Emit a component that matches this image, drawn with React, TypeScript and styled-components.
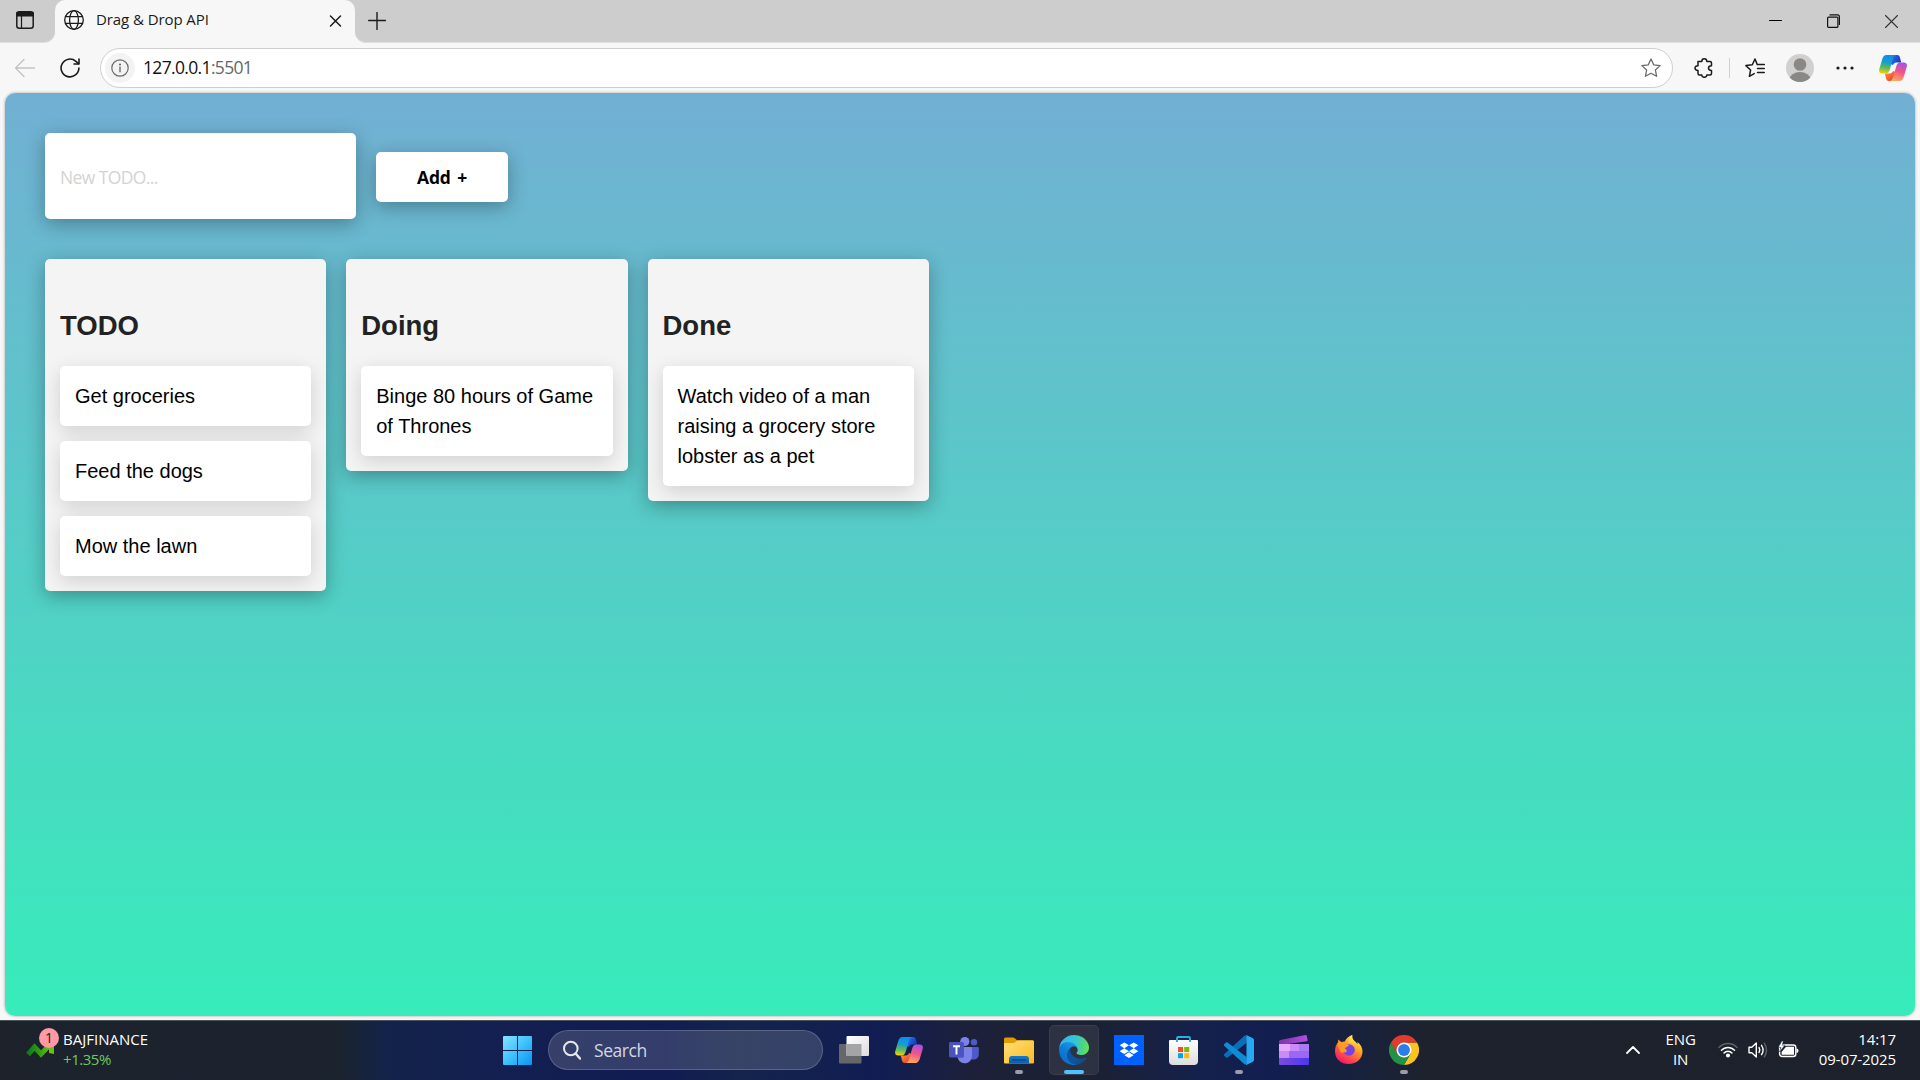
import React from "react";
import styled, { createGlobalStyle } from "styled-components";

const UI_FONT = '"Segoe UI", "Open Sans", "Noto Sans", sans-serif';

const GlobalStyle = createGlobalStyle`
  *, *::before, *::after { box-sizing: border-box; }
  html, body { margin: 0; padding: 0; overflow: hidden; }
  body { font-family: ${UI_FONT}; background: #f7f7f7; }
  svg { display: block; flex: none; }
`;

const Screen = styled.div`
  width: 1920px;
  height: 1080px;
  display: flex;
  flex-direction: column;
  background: #f7f7f7;
  overflow: hidden;
`;

/* ---------- Browser frame ---------- */

const TitleBar = styled.header`
  display: flex;
  height: 43px;
  flex: none;
`;

const Strip = styled.div<{ $side: "left" | "right" }>`
  display: flex;
  align-items: center;
  background: #cdcdcd;
  border-bottom: 1px solid #dedede;
  ${(p) =>
    p.$side === "left"
      ? "width: 55px; padding: 0 0 3px 16px; border-bottom-right-radius: 11px;"
      : "flex: 1; padding: 0 22px 1px 13px; border-bottom-left-radius: 11px;"}
`;

const TabSlot = styled.div`
  width: 300px;
  background: linear-gradient(#cdcdcd 50%, #f7f7f7 50%);
`;

const Tab = styled.div`
  height: 43px;
  display: flex;
  align-items: center;
  padding: 0 13px 3px 9px;
  border-radius: 10px 10px 0 0;
  background: #f7f7f7;
`;

const TabTitle = styled.span`
  flex: 1;
  margin: 0 0 2px 12px;
  font-size: 15px;
  line-height: 20px;
  letter-spacing: -0.08px;
  color: #1b1b1b;
  white-space: nowrap;
`;

const WindowButtons = styled.div`
  display: flex;
  align-items: center;
  gap: 45px;
  margin-left: auto;
`;

const Toolbar = styled.div`
  display: flex;
  align-items: center;
  height: 50px;
  flex: none;
  padding: 0 12px 0 14px;
`;

const AddressBar = styled.div`
  display: flex;
  align-items: center;
  width: 1573px;
  height: 40px;
  margin-left: 20px;
  padding: 0 11px 0 4px;
  background: #fff;
  border: 1px solid #cfcfcf;
  border-radius: 20px;
`;

const SiteInfo = styled.span`
  display: grid;
  place-items: center;
  width: 30px;
  height: 30px;
  border-radius: 50%;
  background: #f3f3f3;
`;

const Address = styled.span`
  flex: 1;
  margin: 0 0 2px 8px;
  font-size: 17.5px;
  line-height: 24px;
  letter-spacing: -0.66px;
  color: #111;
`;

const Port = styled.span`
  color: #666;
`;

const ToolbarActions = styled.div`
  display: flex;
  align-items: center;
  margin-left: 21px;
`;

const ToolbarDivider = styled.span`
  width: 1px;
  height: 20px;
  margin: 0 15px 0 14px;
  background: #cfcfcf;
`;

const Gap = styled.span<{ $w: number }>`
  width: ${(p) => p.$w}px;
`;

/* ---------- Kanban page ---------- */

const Page = styled.main`
  height: 923px;
  margin: 0 5px;
  padding: 40px;
  border-radius: 10px;
  background: linear-gradient(to top, #37ecba 0%, #72afd3 100%);
  box-shadow: 0 0 3px rgba(0, 0, 0, 0.35);
  font-family: Arial, "Liberation Sans", sans-serif;
  flex: none;
`;

const TodoForm = styled.form`
  display: flex;
  align-items: center;
  gap: 20px;
  margin-bottom: 40px;
`;

const TodoInput = styled.input`
  width: 311px;
  height: 86px;
  padding: 17px 15px 15px;
  border: none;
  border-radius: 5px;
  background: #fff;
  box-shadow: 0 5px 19px rgba(0, 0, 0, 0.3);
  font: 17.5px ${UI_FONT};
  letter-spacing: -0.6px;
  outline: none;
  &::placeholder { color: #d3d3d3; opacity: 1; }
`;

const AddButton = styled.button`
  width: 132px;
  height: 50px;
  margin-top: 2px;
  padding: 0;
  border: none;
  border-radius: 5px;
  background: #fff;
  box-shadow: 0 5px 19px rgba(0, 0, 0, 0.3);
  font: 700 17.5px ${UI_FONT};
  letter-spacing: -0.15px;
  word-spacing: 2px;
  color: #000;
`;

const Lanes = styled.div`
  display: flex;
  align-items: flex-start;
  gap: 20px;
`;

const Lane = styled.section`
  display: flex;
  flex-direction: column;
  gap: 15px;
  width: 281.25px;
  padding: 15px;
  border-radius: 5px;
  background: #f4f4f4;
  box-shadow: 0 5px 19px rgba(0, 0, 0, 0.3);
`;

const LaneTitle = styled.h3`
  margin: 34px 0 7px;
  font-size: 27.5px;
  line-height: 36px;
  font-weight: 700;
  color: #222;
`;

const Task = styled.p`
  margin: 0;
  padding: 15px;
  border-radius: 5px;
  background: #fff;
  box-shadow: 0 5px 19px rgba(0, 0, 0, 0.15);
  font-size: 20px;
  line-height: 30px;
  color: #000;
`;

/* ---------- Taskbar ---------- */

const Taskbar = styled.footer`
  display: flex;
  height: 60px;
  margin-top: 4px;
  flex: none;
  border-top: 1px solid #4a525c;
  background: linear-gradient(90deg, #1d222b 0, #1b232f 340px, #13234a 385px, #132050 480px, #111c52 660px, #14244c 740px, #111d53 880px, #1d2039 970px, #1c2031 1090px, #14214c 1200px, #111e50 1270px, #16213f 1340px, #1e222d 1430px, #1c212b 100%);
  color: #fff;
`;

const Widget = styled.div`
  display: flex;
  width: 492px;
  padding-left: 26px;
`;

const WidgetArt = styled.div`
  position: relative;
  width: 37px;
  padding-top: 18px;
`;

const WidgetBadge = styled.span`
  position: absolute;
  left: 13px;
  top: 7px;
  width: 20px;
  height: 20px;
  border-radius: 50%;
  background: #ff99a4;
  color: #1b1b1b;
  font-size: 14px;
  line-height: 20px;
  text-align: center;
`;

const Stack = styled.div<{ $align?: string; $spacing?: number }>`
  display: flex;
  flex-direction: column;
  align-items: ${(p) => p.$align ?? "flex-start"};
  padding-top: 8px;
  font-size: 15px;
  line-height: 20px;
  letter-spacing: ${(p) => p.$spacing ?? -0.1}px;
  white-space: nowrap;
`;

const Gain = styled.span`
  color: #6ccb5f;
  letter-spacing: -0.45px;
`;

const Apps = styled.div`
  display: flex;
  align-items: center;
  gap: 5px;
  padding-bottom: 1px;
`;

const AppSlot = styled.div<{ $active?: boolean; $run?: boolean }>`
  position: relative;
  display: grid;
  place-items: center;
  width: 50px;
  height: 50px;
  border-radius: 5px;
  background: ${(p) => (p.$active ? "rgba(255,255,255,0.08)" : "transparent")};
  box-shadow: ${(p) => (p.$active ? "inset 0 0 0 1px rgba(255,255,255,0.06)" : "none")};
  &::after {
    content: "";
    display: ${(p) => (p.$active || p.$run ? "block" : "none")};
    position: absolute;
    bottom: 1px;
    left: ${(p) => (p.$active ? 15 : 21)}px;
    width: ${(p) => (p.$active ? 20 : 8)}px;
    height: 4px;
    border-radius: 2px;
    background: ${(p) => (p.$active ? "#4cc2ff" : "#9a9ca6")};
  }
`;

const SearchBox = styled.div`
  display: flex;
  align-items: center;
  gap: 13px;
  width: 275px;
  height: 40px;
  margin: 0 1px;
  padding-left: 14px;
  border: 1px solid rgba(255, 255, 255, 0.18);
  border-radius: 20px;
  background: rgba(255, 255, 255, 0.15);
  color: #d3d7e2;
  font-size: 17.5px;
  letter-spacing: -0.45px;
`;

const Tray = styled.div`
  display: flex;
  align-items: stretch;
  margin-left: auto;
  padding-right: 24px;
`;

const TrayIcons = styled.div`
  display: flex;
  align-items: center;
  padding: 0 0 2px;
`;

/* ---------- Icons ---------- */

type LineIconProps = { w?: number; h?: number; color?: string; sw?: number; children: React.ReactNode };

const LineIcon = ({ w = 20, h = 20, color = "#1b1b1b", sw = 1.4, children }: LineIconProps) => (
  <svg width={w} height={h} viewBox={`0 0 ${w} ${h}`} fill="none" stroke={color} strokeWidth={sw} strokeLinecap="round" strokeLinejoin="round">
    {children}
  </svg>
);

const CopilotLogo = ({ id }: { id: string }) => (
  <svg width="28" height="26" viewBox="0 0 28 26">
    <defs>
      <linearGradient id={`${id}a`} x1="0.4" y1="0" x2="0.25" y2="1">
        <stop offset="0.1" stopColor="#0d91e8" />
        <stop offset="0.4" stopColor="#1b9fc8" />
        <stop offset="0.7" stopColor="#62bd56" />
        <stop offset="1" stopColor="#ffd000" />
      </linearGradient>
      <linearGradient id={`${id}b`} x1="0.7" y1="0" x2="0.4" y2="1">
        <stop offset="0" stopColor="#a550e8" />
        <stop offset="0.5" stopColor="#f25588" />
        <stop offset="1" stopColor="#ffa85c" />
      </linearGradient>
      <linearGradient id={`${id}c`} x1="0" y1="0" x2="1" y2="0.5">
        <stop offset="0" stopColor="#2a7df0" />
        <stop offset="1" stopColor="#1736c4" />
      </linearGradient>
      <linearGradient id={`${id}d`} x1="0" y1="0" x2="1" y2="1">
        <stop offset="0" stopColor="#ff9a3c" />
        <stop offset="1" stopColor="#e8352c" />
      </linearGradient>
    </defs>
    <path d="M13 0h5.200c1.800 0 2.400 1.200 2.900 3l1.100 4.500h-4c-2.200 0-3.400.6-4.200 2.500L11.500 9z" fill={`url(#${id}c)`} />
    <path d="M15 26H9.800c-1.800 0-2.400-1.200-2.900-3l-1.100-4.500h4c2.200 0 3.400-.6 4.200-2.500l2.500 1z" fill={`url(#${id}d)`} />
    <path d="M7.600 0h9.400c-1.600.3-2.300 1.500-2.900 3.400L10.700 14.800C9.900 17.200 9 18.500 6.600 18.500H3.400C.6 18.500-.4 16.600.3 14L3.200 4.200C4 1.500 5.300 0 7.600 0z" fill={`url(#${id}a)`} />
    <path d="M20.400 26H11c1.600-.3 2.300-1.500 2.900-3.400l3.400-11.400c.8-2.400 1.700-3.700 4.100-3.700h3.200c2.800 0 3.800 1.900 3.100 4.500l-2.900 9.800c-.8 2.700-2.100 4.200-4.400 4.200z" fill={`url(#${id}b)`} />
  </svg>
);

const StartLogo = () => (
  <svg width="30" height="30" viewBox="0 0 30 30">
    <defs>
      <linearGradient id="win" x1="0" y1="0" x2="30" y2="30" gradientUnits="userSpaceOnUse">
        <stop offset="0" stopColor="#8fe3ff" />
        <stop offset="0.5" stopColor="#3fc4fb" />
        <stop offset="1" stopColor="#0a93f5" />
      </linearGradient>
    </defs>
    <path d="M2 1h13v14H1V2q0-1 1-1zM16 1h13q1 0 1 1v13H16zM1 16h14v14H2q-1 0-1-1zM16 16h14v13q0 1-1 1H16z" fill="url(#win)" />
  </svg>
);

const TaskViewLogo = () => (
  <svg width="30" height="30" viewBox="0 0 30 30">
    <defs>
      <linearGradient id="tv" x1="0" y1="0" x2="1" y2="1">
        <stop offset="0" stopColor="#fff" />
        <stop offset="1" stopColor="#dcdcdc" />
      </linearGradient>
    </defs>
    <rect x="0" y="9" width="22.500" height="19.500" rx="1" fill="#66676b" />
    <rect x="7.500" y="1" width="22.500" height="20" rx="1" fill="url(#tv)" />
    <path d="M7.500 9h15v12h-15z" fill="#a4a4a6" />
  </svg>
);

const TeamsLogo = () => (
  <svg width="30" height="30" viewBox="0 0 30 30">
    <circle cx="25" cy="7.300" r="3.200" fill="#5059c9" />
    <path d="M21 12h7.500q1.300 0 1.300 1.300V19c0 4-2.800 5.500-5 5.500H21z" fill="#5059c9" />
    <circle cx="15.800" cy="6.500" r="4.600" fill="#7b83eb" />
    <path d="M8.500 12h13.200q1.300 0 1.300 1.300v7.200c0 4.700-3.200 7.800-7.300 7.800s-7.200-3-7.200-7.500z" fill="#7b83eb" />
    <path d="M9 8h6v14.500H9z" fill="#4249a5" opacity=".55" />
    <rect x="0" y="7" width="14.800" height="15.500" rx="1.400" fill="#4b53bc" />
    <path d="M4 11.200h7M7.500 11.200v8.200" stroke="#fff" strokeWidth="1.900" fill="none" />
  </svg>
);

const ExplorerLogo = () => (
  <svg width="30" height="30" viewBox="0 0 30 30">
    <defs>
      <linearGradient id="fold" x1="0" y1="0" x2="1" y2="1">
        <stop offset="0" stopColor="#ffe07a" />
        <stop offset="1" stopColor="#fbb91c" />
      </linearGradient>
      <linearGradient id="foldB" x1="0" y1="0" x2="0" y2="1">
        <stop offset="0" stopColor="#1479c9" />
        <stop offset="1" stopColor="#0b5fae" />
      </linearGradient>
    </defs>
    <path d="M1.500 2.500H9q1 0 1.800.8L13 5.200h15.500q1.500 0 1.500 1.500V12H0V4q0-1.500 1.500-1.500z" fill="#e09d00" />
    <path d="M0 8h9.500q1 0 1.800-.8L12.500 6q.5-.4 1.200-.4h14.800Q30 5.600 30 7v20.500q0 1-1 1H1q-1 0-1-1z" fill="url(#fold)" />
    <path d="M5 28.500V24q0-3 3-3h14q3 0 3 3v4.500z" fill="url(#foldB)" />
    <path d="M8.500 25h13" stroke="#0a4a8a" strokeWidth="1.400" strokeLinecap="round" />
  </svg>
);

const EdgeLogo = () => (
  <svg width="30" height="30" viewBox="0 0 256 256">
    <defs>
      <linearGradient id="e1" x1="60" y1="175" x2="240" y2="175" gradientUnits="userSpaceOnUse">
        <stop offset="0" stopColor="#0c59a4" />
        <stop offset="1" stopColor="#114a8b" />
      </linearGradient>
      <linearGradient id="e2" x1="150" y1="90" x2="45" y2="220" gradientUnits="userSpaceOnUse">
        <stop offset="0" stopColor="#1b9de2" />
        <stop offset="0.5" stopColor="#0f7fd6" />
        <stop offset="1" stopColor="#0c6fd0" />
      </linearGradient>
      <linearGradient id="e3" x1="10" y1="60" x2="250" y2="110" gradientUnits="userSpaceOnUse">
        <stop offset="0" stopColor="#35b4ec" />
        <stop offset="0.5" stopColor="#34c4d4" />
        <stop offset="0.8" stopColor="#4bd584" />
        <stop offset="1" stopColor="#66e255" />
      </linearGradient>
    </defs>
    <path d="M231 190.500c-3.400 1.800-6.900 3.400-10.500 4.700a101.500 101.500 0 0 1-35.900 6.500c-47.300 0-88.500-32.500-88.500-74.300a31.500 31.500 0 0 1 16.400-27.300c-42.800 1.800-53.800 46.400-53.800 72.500 0 74 68.100 81.400 82.800 81.400 7.900 0 19.800-2.300 27-4.600l1.300-.4a128.300 128.300 0 0 0 66.600-52.800 4 4 0 0 0-5.400-5.700z" fill="url(#e1)" />
    <path d="M105.700 241.400a79.200 79.200 0 0 1-22.700-21.300 80.700 80.700 0 0 1 29.500-120c3.200-1.500 8.500-4.100 15.600-4a32.400 32.400 0 0 1 25.700 13 31.900 31.900 0 0 1 6.300 18.700c0-.2 24.500-79.600-80-79.600-43.900 0-80 41.700-80 78.200a130.200 130.200 0 0 0 12.100 56 128 128 0 0 0 156.400 67 75.500 75.500 0 0 1-62.800-8z" fill="url(#e2)" />
    <path d="M152.300 148.900c-.8 1-3.300 2.500-3.300 5.700 0 2.600 1.700 5.100 4.700 7.200 14.400 10 41.500 8.700 41.600 8.700a59.600 59.600 0 0 0 30.300-8.300 61.400 61.400 0 0 0 30.400-52.900c.3-22.400-8-37.300-11.300-43.900C223.500 23.900 177.700 0 128 0A128 128 0 0 0 0 126.200c.5-36.500 36.800-66 80-66 3.500 0 23.500.3 42 10a72.600 72.600 0 0 1 30.900 29.300c6.100 10.600 7.200 24.100 7.200 29.500s-2.700 13.300-7.800 19.900z" fill="url(#e3)" />
  </svg>
);

const DropboxLogo = () => (
  <svg width="30" height="30" viewBox="0 0 30 30">
    <path d="M0 0h30v30H0z" fill="#0061fe" />
    <path d="M10.300 7.400l4.700 2.900-4.700 2.900-4.700-2.900zM19.700 7.400l4.700 2.900-4.700 2.900-4.700-2.900zM10.300 13.300l4.700 2.900-4.700 2.900-4.700-2.900zM19.700 13.300l4.700 2.900-4.700 2.900-4.700-2.900zM15 17.300l4.600 2.900L15 23l-4.600-2.800z" fill="#fff" />
  </svg>
);

const StoreLogo = () => (
  <svg width="30" height="30" viewBox="0 0 30 30">
    <defs>
      <linearGradient id="bag" x1="0" y1="0" x2="0" y2="1">
        <stop offset="0" stopColor="#fff" />
        <stop offset="1" stopColor="#dcdcdc" />
      </linearGradient>
    </defs>
    <path d="M1 5h27q1 0 1 1v20q0 4-4 4H4q-4 0-4-4V6q0-1 1-1z" fill="url(#bag)" />
    <path d="M8 7V3.200q0-1.200 1.200-1.200h10.600Q21 2 21 3.200V7" fill="none" stroke="#27aeea" strokeWidth="1.900" />
    <path d="M9 12h5v5H9z" fill="#f25022" />
    <path d="M15.200 12h5v5h-5z" fill="#7fba00" />
    <path d="M9 18.200h5v5H9z" fill="#00a4ef" />
    <path d="M15.200 18.200h5v5h-5z" fill="#ffb900" />
  </svg>
);

const CodeLogo = () => (
  <svg width="30" height="30" viewBox="0 0 100 100">
    <path d="M75 27L12 74.800a4.200 4.200 0 0 1-5.300-.2l-5.400-5a4.200 4.200 0 0 1 0-6.100L69 2l8 4z" fill="#0a6fb8" />
    <path d="M75 73L12 25.200a4.200 4.200 0 0 0-5.300.2l-5.400 5a4.200 4.200 0 0 0 0 6.100L69 98l8-4z" fill="#118bd4" />
    <path d="M75.900 99.100a6.200 6.200 0 0 1-7.100-1.200c2.300 2.300 6.200.7 6.200-2.600V4.700c0-3.300-3.900-4.900-6.200-2.600a6.200 6.200 0 0 1 7.100-1.200l20.600 9.900a6.200 6.200 0 0 1 3.500 5.600v67.200a6.200 6.200 0 0 1-3.500 5.600z" fill="#27a9f1" />
  </svg>
);

const ClipchampLogo = () => (
  <svg width="30" height="30" viewBox="0 0 30 30">
    <defs>
      <linearGradient id="cl" x1="0" y1="0" x2="1" y2="0">
        <stop offset="0" stopColor="#7a4be0" />
        <stop offset="1" stopColor="#4a38ee" />
      </linearGradient>
      <linearGradient id="cl2" x1="0" y1="0" x2="1" y2="0">
        <stop offset="0" stopColor="#7a35a5" />
        <stop offset="1" stopColor="#b04fe0" />
      </linearGradient>
    </defs>
    <path d="M1.200 5L26.500.1q1-.2 1.300.8l.8 4.200q.2 1-.8 1.200L2 10 0 8.700V6.200Q.2 5.200 1.200 5z" fill="url(#cl2)" />
    <path d="M0 9h29q1 0 1 1v6H0z" fill="#c98bf8" />
    <path d="M0 9h11v7H0z" fill="#e6a9fb" />
    <path d="M20 9h9q1 0 1 1v6H20z" fill="#a87af5" />
    <path d="M0 16h30v7H0z" fill="#9a68f3" />
    <path d="M0 16h10v7H0z" fill="#c98bf3" />
    <path d="M0 23h30v6q0 1-1 1H1q-1 0-1-1z" fill="url(#cl)" />
  </svg>
);

const FirefoxLogo = () => (
  <svg width="30" height="30" viewBox="0 0 30 30">
    <defs>
      <linearGradient id="ff" x1="0.800" y1="0.050" x2="0.250" y2="0.950">
        <stop offset="0" stopColor="#fff44f" />
        <stop offset="0.300" stopColor="#ffb52a" />
        <stop offset="0.600" stopColor="#ff6a36" />
        <stop offset="1" stopColor="#f5156c" />
      </linearGradient>
      <linearGradient id="ffy" x1="0.500" y1="0" x2="0.500" y2="1">
        <stop offset="0" stopColor="#fff24a" />
        <stop offset="1" stopColor="#ff9a20" />
      </linearGradient>
    </defs>
    <path d="M18.300 0c-.6 3 .6 4.600 2.700 6.600 1.200 1 2 2 2.300 3 .3-.8.200-1.700 0-2.600 3.500 2.600 5.200 5.600 5.200 9.500 0 7.200-5.900 12.500-13.900 12.500C6.800 29 1 23.600 1 16.400c0-3.700 1-6.800 3-9.200L4.200 4.600 7.300 7c1.200-.5 2.200-.7 3.500-.6 1.300-3 4-5.400 7.500-6.400z" fill="url(#ff)" />
    <path d="M18.300 0c-.6 3 .6 4.600 2.700 6.600C24.500 9.500 25.500 13 24.300 17c-1-6-4.600-8-9.300-9.500 0-3.500 1.300-6 3.300-7.500z" fill="url(#ffy)" />
    <circle cx="15" cy="15" r="5.800" fill="#7542e5" />
    <path d="M3.800 7.800l3.500-.5c3 .6 5.400 2.200 7.700 2.700-.2 1.700-3.500 2-4.200 3.600 2 .8 2.600 2.400 1.200 4-2.300-.6-3.600-.4-4.300.3C5.200 15 3.800 12 3.800 7.800z" fill="#ff9a2a" />
  </svg>
);

const ChromeLogo = () => (
  <svg width="30" height="30" viewBox="0 0 48 48">
    <path d="M24 24V12h20.800A24 24 0 0 1 24 48l10.400-18z" fill="#fcc31e" />
    <path d="M24 24l10.400 6L24 48A24 24 0 0 1 3.200 12l10.400 18z" fill="#229342" />
    <path d="M3.200 12L13.600 30 24 12z" fill="#229342" />
    <path d="M3.200 12A24 24 0 0 1 44.800 12H24L13.600 30z" fill="#e33b2e" />
    <circle cx="24" cy="24" r="12" fill="#fff" />
    <circle cx="24" cy="24" r="9.500" fill="#2b7de9" />
  </svg>
);

/* ---------- Data ---------- */

const lanes = [
  { title: "TODO", tasks: ["Get groceries", "Feed the dogs", "Mow the lawn"] },
  { title: "Doing", tasks: ["Binge 80 hours of Game of Thrones"] },
  { title: "Done", tasks: ["Watch video of a man raising a grocery store lobster as a pet"] },
];

const apps: { name: string; icon: React.ReactNode; run?: boolean; active?: boolean }[] = [
  { name: "task-view", icon: <TaskViewLogo /> },
  { name: "copilot", icon: <CopilotLogo id="cpb" /> },
  { name: "teams", icon: <TeamsLogo /> },
  { name: "explorer", icon: <ExplorerLogo />, run: true },
  { name: "edge", icon: <EdgeLogo />, active: true },
  { name: "dropbox", icon: <DropboxLogo /> },
  { name: "store", icon: <StoreLogo /> },
  { name: "code", icon: <CodeLogo />, run: true },
  { name: "clipchamp", icon: <ClipchampLogo /> },
  { name: "firefox", icon: <FirefoxLogo /> },
  { name: "chrome", icon: <ChromeLogo />, run: true },
];

/* ---------- App ---------- */

export default function App() {
  return (
    <Screen>
      <GlobalStyle />
      <TitleBar>
        <Strip $side="left">
          <LineIcon w={18} h={18} sw={1.5}>
            <rect x="0.800" y="0.800" width="16.400" height="16.400" rx="2.500" />
            <path d="M1 1.800h16v3H1z" fill="#1b1b1b" />
            <path d="M5.500 5v12" strokeWidth="1.200" />
          </LineIcon>
        </Strip>
        <TabSlot>
          <Tab>
            <LineIcon sw={1.3}>
              <circle cx="10" cy="10" r="9.300" />
              <ellipse cx="10" cy="10" rx="4.400" ry="9.300" />
              <path d="M1.500 6.700h17M1.500 13.300h17" />
            </LineIcon>
            <TabTitle>Drag &amp; Drop API</TabTitle>
            <LineIcon w={13} h={13} sw={1.5}>
              <path d="M1.500 2l10 10M11.500 2l-10 10" />
            </LineIcon>
          </Tab>
        </TabSlot>
        <Strip $side="right">
          <LineIcon w={18} h={18} sw={1.4}>
            <path d="M9 .5v17M.7 8.500h16.800" />
          </LineIcon>
          <WindowButtons>
            <LineIcon w={13} h={14} sw={1}>
              <path d="M.5 6.500h12" stroke="#000" />
            </LineIcon>
            <LineIcon w={13} h={14} sw={1.2} color="#111">
              <rect x=".6" y="3.100" width="10.300" height="10.300" rx="1" />
              <path d="M3 .9h7.400q2 0 2 2v7.600" />
            </LineIcon>
            <LineIcon w={13} h={14} sw={1.1} color="#333">
              <path d="M.5 1.500l12 12M12.500 1.500l-12 12" />
            </LineIcon>
          </WindowButtons>
        </Strip>
      </TitleBar>

      <Toolbar>
        <LineIcon w={22} color="#c3c3c3" sw={1.3}>
          <path d="M20.500 10H1.500M10 1.500L1.500 10l8.500 8.500" />
        </LineIcon>
        <Gap $w={24} />
        <LineIcon w={20} sw={1.6}>
          <path d="M18.900 10a8.900 8.900 0 1 1-3-6.700l2.600 2.400" />
          <path d="M19 1v5h-5" />
        </LineIcon>
        <AddressBar>
          <SiteInfo>
            <LineIcon w={18} h={18} color="#6b6b6b" sw={1.2}>
              <circle cx="9" cy="9" r="8.200" />
              <path d="M9 8v4.800" strokeWidth="1.400" />
              <circle cx="9" cy="5.500" r=".5" fill="#6b6b6b" />
            </LineIcon>
          </SiteInfo>
          <Address>
            127.0.0.1<Port>:5501</Port>
          </Address>
          <LineIcon color="#6b6b6b" sw={1.3}>
            <path d="M10 1l2.700 5.800 6.400.8-4.700 4.400 1.200 6.300L10 15.200l-5.600 3.100L5.600 12 .9 7.600l6.400-.8z" />
          </LineIcon>
        </AddressBar>
        <ToolbarActions>
          <LineIcon w={21} sw={1.5}>
            <path d="M4.500 3.500h3.300c0-1.700 1-2.700 2.500-2.700s2.500 1 2.500 2.700h3.200q1.500 0 1.500 1.500v2.700c-2 0-3 .8-3 2.400s1 2.400 3 2.400v3q0 1.500-1.500 1.500h-3.200c0 1.500-1 2.300-2.500 2.300S7.800 18.500 7.800 17H5.500Q4 17 4 15.500v-3c-1.900 0-3-.9-3-2.400s1.100-2.400 3-2.400V3.500z" />
          </LineIcon>
          <ToolbarDivider />
          <LineIcon sw={1.5}>
            <path d="M12.300 6.600L10 1 7.300 6.800l-6.400.8L5.600 12l-1.200 6.300 4.800-2.700M13.500 6.600h5.800M12.500 10.500h6.800M12.500 14.500h6.800" />
          </LineIcon>
          <Gap $w={21} />
          <svg width="28" height="28" viewBox="0 0 28 28">
            <defs>
              <clipPath id="avatar"><circle cx="14" cy="14" r="14" /></clipPath>
            </defs>
            <circle cx="14" cy="14" r="14" fill="#d2d0ce" />
            <g clipPath="url(#avatar)" fill="#8a8886">
              <circle cx="14" cy="10.500" r="6.300" />
              <ellipse cx="14" cy="25.500" rx="10.500" ry="7.500" />
            </g>
          </svg>
          <Gap $w={22} />
          <svg width="18" height="4" viewBox="0 0 18 4" fill="#1b1b1b">
            <circle cx="2" cy="2" r="1.600" />
            <circle cx="9" cy="2" r="1.600" />
            <circle cx="16" cy="2" r="1.600" />
          </svg>
          <Gap $w={25} />
          <CopilotLogo id="cpa" />
        </ToolbarActions>
      </Toolbar>

      <Page>
        <TodoForm>
          <TodoInput placeholder="New TODO..." />
          <AddButton type="button">Add +</AddButton>
        </TodoForm>
        <Lanes>
          {lanes.map((lane) => (
            <Lane key={lane.title}>
              <LaneTitle>{lane.title}</LaneTitle>
              {lane.tasks.map((task) => (
                <Task key={task}>{task}</Task>
              ))}
            </Lane>
          ))}
        </Lanes>
      </Page>

      <Taskbar>
        <Widget>
          <WidgetArt>
            <svg width="28" height="20" viewBox="0 0 28 20">
              <defs>
                <linearGradient id="trend" x1="0" y1="0" x2="1" y2="0">
                  <stop offset="0" stopColor="#0f7a1c" />
                  <stop offset="0.500" stopColor="#2f9e12" />
                  <stop offset="1" stopColor="#6ccb12" />
                </linearGradient>
              </defs>
              <path d="M2 15.500l6.500-7.500 6.500 7L25 4.500" stroke="url(#trend)" strokeWidth="5" fill="none" />
              <path d="M16 2.500h12V15l-5-1V7z" fill="#63c50f" />
            </svg>
            <WidgetBadge>1</WidgetBadge>
          </WidgetArt>
          <Stack $spacing={0}>
            <span>BAJFINANCE</span>
            <Gain>+1.35%</Gain>
          </Stack>
        </Widget>

        <Apps>
          <AppSlot><StartLogo /></AppSlot>
          <SearchBox>
            <LineIcon w={18} h={20} color="#e6e8ee" sw={2}>
              <circle cx="7.800" cy="8.500" r="6.800" />
              <path d="M12.800 13.700l4.200 4.800" strokeWidth="2.400" />
            </LineIcon>
            Search
          </SearchBox>
          {apps.map((app) => (
            <AppSlot key={app.name} $active={app.active} $run={app.run}>
              {app.icon}
            </AppSlot>
          ))}
        </Apps>

        <Tray>
          <TrayIcons>
            <LineIcon w={14} h={8} color="#fff" sw={1.8}>
              <path d="M1 7l6-6 6 6" />
            </LineIcon>
          </TrayIcons>
          <Gap $w={25} />
          <Stack $align="center">
            <span>ENG</span>
            <span>IN</span>
          </Stack>
          <Gap $w={22} />
          <TrayIcons>
            <LineIcon w={20} h={16} color="#fff" sw={1.5}>
              <path d="M1 5.500c5-5.300 13-5.300 18 0" stroke="#5d626b" />
              <path d="M3.500 8.300c3.600-3.900 9.400-3.900 13 0M6 11c2.200-2.400 5.800-2.400 8 0" />
              <circle cx="10" cy="13.500" r="1.300" fill="#fff" />
            </LineIcon>
            <Gap $w={10} />
            <LineIcon w={20} h={18} color="#fff" sw={1.4}>
              <path d="M1 6.200h2.800L8.300 2v14l-4.500-4.200H1z" />
              <path d="M11 6.500q1.600 2.500 0 5M13.500 4.300q3.200 4.700 0 9.400" />
              <path d="M16.300 2.200q4.500 6.800 0 13.600" stroke="#5d626b" />
            </LineIcon>
            <Gap $w={10} />
            <svg width="21" height="18" viewBox="0 0 21 18">
              <rect x="1.600" y="4" width="16.200" height="11.500" rx="2.500" fill="none" stroke="#fff" strokeWidth="1.400" />
              <path d="M18.500 7.500q2 0 2 2.200t-2 2.200z" fill="#fff" />
              <path d="M3.600 13.700V11l4.400-5.200h8v7.900z" fill="#fff" />
              <path d="M3.800 0L.3 6.500h2.600L1.500 11 6.800 4.200H4.300L5.300 0z" fill="#fff" stroke="#1c212b" strokeWidth=".5" />
            </svg>
          </TrayIcons>
          <Gap $w={20} />
          <Stack $align="flex-end">
            <span>14:17</span>
            <span>09-07-2025</span>
          </Stack>
        </Tray>
      </Taskbar>
    </Screen>
  );
}
